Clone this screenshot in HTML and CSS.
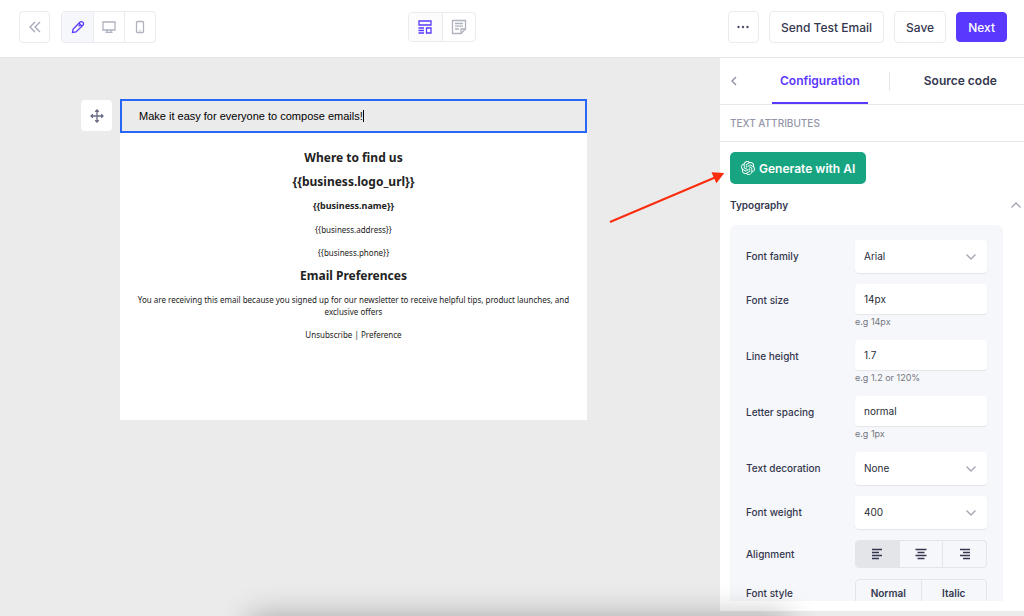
FILE: index.html
```html
<!DOCTYPE html>
<html lang="en">
<head>
  <meta charset="UTF-8">
  <meta name="viewport" content="width=device-width, initial-scale=1.0">
  <title>Email Editor</title>
  <link rel="stylesheet" href="styles.css">
</head>
<body>
  <header class="topbar">
    <div class="topbar-group">
      <button class="icon-btn" aria-label="Back">
        <svg width="14" height="14" viewBox="0 0 14 14"><path d="M7 2 2 7l5 5M12 2 7 7l5 5"/></svg>
      </button>
      <div class="segmented">
        <button class="active" aria-label="Edit">
          <svg width="14" height="14" viewBox="0 0 14 14"><path d="M1.5 12.5 2 9.3 8.8 2.2a2.2 2.2 0 0 1 3.1 3.1L5 12zM8 3.2l2.8 2.8M7.6 6.4l1.8-1.8"/></svg>
        </button>
        <button aria-label="Desktop preview">
          <svg width="14" height="14" viewBox="0 0 14 14"><path d="M1 2h12v8H1zM5 10v2M9 10v2M3.500 12.300h7"/></svg>
        </button>
        <button aria-label="Mobile preview">
          <svg width="14" height="14" viewBox="0 0 14 14"><rect x="3.5" y="1.500" width="7" height="11" rx="1"/><path d="M6.500 10.500h1"/></svg>
        </button>
      </div>
    </div>

    <div class="segmented views">
      <button class="active" aria-label="Blocks">
        <svg width="14" height="14" viewBox="0 0 14 14"><path d="M1 1h12v4H1zM8.500 8H13v5H8.500zM.5 8H6M.5 10.500H6M.5 13H6"/></svg>
      </button>
      <button aria-label="Notes">
        <svg width="16" height="16" viewBox="0 0 16 16"><path d="M1.500 1.500h13V10L10 14.500H1.500zM10 14.500V10h4.500M4 4.500h8M4 7.200h8M4 10h4"/></svg>
      </button>
    </div>

    <div class="topbar-group actions">
      <button class="icon-btn dots" aria-label="More">
        <svg width="14" height="14" viewBox="0 0 14 14"><circle cx="2.500" cy="7" r="1.200"/><circle cx="7" cy="7" r="1.200"/><circle cx="11.500" cy="7" r="1.200"/></svg>
      </button>
      <button class="btn">Send Test Email</button>
      <button class="btn">Save</button>
      <button class="btn btn-primary">Next</button>
    </div>
  </header>

  <div class="workspace">
    <main class="canvas">
      <button class="drag-handle" aria-label="Move block">
        <svg width="14" height="14" viewBox="0 0 14 14"><path d="M7 1v12M1 7h12M5.200 2.800 7 1l1.800 1.800M5.200 11.200 7 13l1.800-1.800M2.800 5.200 1 7l1.800 1.800M11.200 5.200 13 7l-1.800 1.800"/></svg>
      </button>
      <article class="email">
        <div class="text-block" contenteditable="true">Make it easy for everyone to compose emails!<span class="caret"></span></div>
        <div class="email-footer">
          <h2>Where to find us</h2>
          <h2>{{business.logo_url}}</h2>
          <h3>{{business.name}}</h3>
          <p>{{business.address}}</p>
          <p>{{business.phone}}</p>
          <h2>Email Preferences</h2>
          <p class="notice">You are receiving this email because you signed up for our newsletter to receive helpful tips, product launches, and exclusive offers</p>
          <p><a href="#">Unsubscribe</a> | <a href="#">Preference</a></p>
        </div>
      </article>
    </main>

    <aside class="sidebar">
      <nav class="tabs">
        <button class="collapse" aria-label="Collapse">
          <svg width="8" height="10" viewBox="0 0 8 10"><path d="M6 1 2 5l4 4"/></svg>
        </button>
        <button class="tab active">Configuration</button>
        <span class="divider"></span>
        <button class="tab">Source code</button>
      </nav>
      <h4 class="attributes-title">TEXT ATTRIBUTES</h4>

      <div class="settings">
        <button class="ai-btn">
          <svg width="14" height="14" viewBox="0 0 24 24"><path d="M22.2819 9.8211a5.9847 5.9847 0 0 0-.5157-4.9108 6.0462 6.0462 0 0 0-6.5098-2.9A6.0651 6.0651 0 0 0 4.9807 4.1818a5.9847 5.9847 0 0 0-3.9977 2.9 6.0462 6.0462 0 0 0 .7427 7.0966 5.98 5.98 0 0 0 .511 4.9107 6.051 6.051 0 0 0 6.5146 2.9001A5.9847 5.9847 0 0 0 13.2599 24a6.0557 6.0557 0 0 0 5.7718-4.2058 5.9894 5.9894 0 0 0 3.9977-2.9001 6.0557 6.0557 0 0 0-.7475-7.0729zm-9.022 12.6081a4.4755 4.4755 0 0 1-2.8764-1.0408l.1419-.0804 4.7783-2.7582a.7948.7948 0 0 0 .3927-.6813v-6.7369l2.02 1.1686a.071.071 0 0 1 .038.052v5.5826a4.504 4.504 0 0 1-4.4945 4.4944zm-9.6607-4.1254a4.4708 4.4708 0 0 1-.5346-3.0137l.142.0852 4.783 2.7582a.7712.7712 0 0 0 .7806 0l5.8428-3.3685v2.3324a.0804.0804 0 0 1-.0332.0615L9.74 19.9502a4.4992 4.4992 0 0 1-6.1408-1.6464zM2.3408 7.8956a4.485 4.485 0 0 1 2.3655-1.9728V11.6a.7664.7664 0 0 0 .3879.6765l5.8144 3.3543-2.0201 1.1685a.0757.0757 0 0 1-.071 0l-4.8303-2.7865A4.504 4.504 0 0 1 2.3408 7.872zm16.5963 3.8558L13.1038 8.364 15.1192 7.2a.0757.0757 0 0 1 .071 0l4.8303 2.7913a4.4944 4.4944 0 0 1-.6765 8.1042v-5.6772a.79.79 0 0 0-.407-.667zm2.0107-3.0231l-.142-.0852-4.7735-2.7818a.7759.7759 0 0 0-.7854 0L9.409 9.2297V6.8974a.0662.0662 0 0 1 .0284-.0615l4.8303-2.7866a4.4992 4.4992 0 0 1 6.6802 4.66zM8.3065 12.863l-2.02-1.1638a.0804.0804 0 0 1-.038-.0567V6.0742a4.4992 4.4992 0 0 1 7.3757-3.4537l-.142.0805L8.704 5.459a.7948.7948 0 0 0-.3927.6813zm1.0976-2.3654l2.602-1.4998 2.6069 1.4998v2.9994l-2.5974 1.4997-2.6067-1.4997Z"/></svg>
          Generate with AI
        </button>

        <button class="section-toggle">
          Typography
          <svg width="12" height="8" viewBox="0 0 12 8"><path d="M1.500 6.500 6 2l4.500 4.500"/></svg>
        </button>

        <form class="panel">
          <div class="field">
            <label for="family">Font family</label>
            <div class="select">
              <select id="family"><option>Arial</option></select>
              <svg width="12" height="8" viewBox="0 0 12 8"><path d="M1.500 1.500 6 6l4.500-4.500"/></svg>
            </div>
          </div>
          <div class="field">
            <label for="size">Font size</label>
            <div>
              <input id="size" type="text" value="14px">
              <small>e.g 14px</small>
            </div>
          </div>
          <div class="field">
            <label for="line">Line height</label>
            <div>
              <input id="line" type="text" value="1.7">
              <small>e.g 1.2 or 120%</small>
            </div>
          </div>
          <div class="field">
            <label for="spacing">Letter spacing</label>
            <div>
              <input id="spacing" type="text" value="normal">
              <small>e.g 1px</small>
            </div>
          </div>
          <div class="field">
            <label for="decoration">Text decoration</label>
            <div class="select">
              <select id="decoration"><option>None</option></select>
              <svg width="12" height="8" viewBox="0 0 12 8"><path d="M1.500 1.500 6 6l4.500-4.500"/></svg>
            </div>
          </div>
          <div class="field">
            <label for="weight">Font weight</label>
            <div class="select">
              <select id="weight"><option>400</option></select>
              <svg width="12" height="8" viewBox="0 0 12 8"><path d="M1.500 1.500 6 6l4.500-4.500"/></svg>
            </div>
          </div>
          <div class="field">
            <span class="label" id="align-label">Alignment</span>
            <div class="toggle" role="group" aria-labelledby="align-label">
              <button type="button" class="active" aria-label="Left">
                <svg width="12" height="12" viewBox="0 0 12 12"><path d="M1 1.500h10M1 4.500h7M1 7.500h10M1 10.500h7"/></svg>
              </button>
              <button type="button" aria-label="Center">
                <svg width="12" height="12" viewBox="0 0 12 12"><path d="M.5 1.500h11M2.500 4.500h7M.5 7.500h11M2.500 10.500h7"/></svg>
              </button>
              <button type="button" aria-label="Right">
                <svg width="12" height="12" viewBox="0 0 12 12"><path d="M1 1.500h10M4 4.500h7M1 7.500h10M4 10.500h7"/></svg>
              </button>
            </div>
          </div>
          <div class="field">
            <span class="label" id="style-label">Font style</span>
            <div class="toggle" role="group" aria-labelledby="style-label">
              <button type="button">Normal</button>
              <button type="button">Italic</button>
            </div>
          </div>
        </form>
      </div>

      <!-- pointer to the AI button -->
      <svg class="arrow" width="116" height="56" viewBox="0 0 116 56">
        <path class="arrow-line" d="M2 53 107 8.500"/>
        <path class="arrow-head" d="M115 4.500 108.500 13 104.500 4z"/>
      </svg>
    </aside>
  </div>
  <div class="dock-shadow"></div>
</body>
</html>
```
FILE: styles.css
```css
* {
  box-sizing: border-box;
}
body {
  margin: 0;
  height: 100vh;
  display: flex;
  flex-direction: column;
  overflow: hidden;
  font-family: Inter, 'Liberation Sans', sans-serif;
  font-size: 10px;
  color: #34374f;
  background: #ebebeb;
}
button, input, select {
  font: inherit;
  color: inherit;
  margin: 0;
  padding: 0;
  border: none;
  background: none;
}
button {
  cursor: pointer;
}
svg {
  display: block;
  fill: none;
  stroke: currentColor;
  stroke-width: 1.3;
}

/* top bar */
.topbar {
  flex: none;
  display: flex;
  justify-content: space-between;
  align-items: center;
  height: 58px;
  padding: 0 17px 3px 19px;
  background: #fff;
  border-bottom: 1px solid #e6e6e6;
}
.topbar-group {
  display: flex;
  align-items: center;
  gap: 11px;
}
.icon-btn, .segmented, .btn {
  height: 32px;
  border: 1px solid #ebebef;
  border-radius: 4px;
}
.icon-btn {
  display: grid;
  place-items: center;
  width: 31px;
  color: #a5a7b8;
}
.dots {
  color: #4d5068;
}
.dots svg {
  fill: currentColor;
  stroke: none;
}
.segmented {
  display: flex;
  overflow: hidden;
  color: #b0b2be;
}
.segmented button {
  display: grid;
  place-items: center;
  width: 31px;
}
.segmented button + button {
  border-left: 1px solid #ebebef;
}
.segmented .active {
  color: #5a38fd;
  background: #f6f7fa;
}
.views {
  height: 30px;
}
.views button {
  width: 33px;
}
.views .active {
  background: #fcfcfc;
}
.btn {
  padding: 0 11px;
  font-size: 12px;
  font-weight: 500;
}
.btn-primary {
  height: 30px;
  color: #fff;
  background: #5a38fd;
  border-color: #5a38fd;
}
.actions {
  gap: 10px;
}

.workspace {
  flex: 1;
  display: flex;
  min-height: 0;
  padding-bottom: 5px;
}

/* email canvas */
.canvas {
  flex: 1;
  display: flex;
  align-items: flex-start;
  gap: 8px;
  padding: 41px 133px 0 81px;
}
.drag-handle {
  flex: none;
  display: grid;
  place-items: center;
  width: 31px;
  height: 31px;
  margin-top: 1px;
  color: #6a6d84;
  background: #fff;
  border-radius: 4px;
}
.email {
  flex: 1;
  background: #fff;
}
.text-block {
  padding: 0 17px;
  border: 2px solid #2866f6;
  background: #ebebeb;
  outline: none;
  color: #000;
  font: 11px/30px 'Liberation Sans', Arial, sans-serif;
}
.caret {
  display: inline-block;
  width: 1px;
  height: 12px;
  vertical-align: -2px;
  background: #000;
}
.email-footer {
  padding: 13px 14px 74px;
  text-align: center;
  color: #222;
  font: 8px/12px 'Lucida Grande', 'Noto Sans', sans-serif;
}
.email-footer h2, .email-footer h3, .email-footer p {
  margin: 0;
}
.email-footer h2 {
  font-size: 12px;
  line-height: 24px;
}
.email-footer h3 {
  font-size: 9px;
  line-height: 24px;
}
.email-footer p {
  line-height: 23px;
}
.email-footer .notice {
  padding: 6px 0 5px;
  line-height: 12px;
}
.email-footer a {
  color: inherit;
  text-decoration: none;
}

/* sidebar */
.sidebar {
  position: relative;
  flex: none;
  display: flex;
  flex-direction: column;
  width: 304px;
  background: #fff;
}
.tabs {
  flex: none;
  display: flex;
  align-items: center;
  height: 47px;
  padding-left: 10px;
  border-bottom: 1px solid #e8e8ec;
}
.collapse {
  color: #8c8fa2;
}
.tab {
  height: 46px;
  padding: 0 8px;
  border-bottom: 2px solid transparent;
  font-size: 12px;
  font-weight: 600;
}
.collapse + .tab {
  margin-left: 34px;
}
.tab.active {
  color: #5a38fd;
  border-color: #5a38fd;
}
.divider {
  width: 1px;
  height: 19px;
  margin: 0 26px 0 21px;
  background: #e8e8ec;
}
.attributes-title {
  flex: none;
  margin: 0;
  padding-left: 10px;
  border-bottom: 1px solid #e8e8ec;
  color: #9496a8;
  font-size: 10px;
  font-weight: 500;
  line-height: 36px;
}
.settings {
  flex: 1;
  min-height: 0;
  margin-bottom: 10px;
  padding: 10px 0 0 10px;
  overflow: hidden;
}
.ai-btn {
  display: flex;
  align-items: center;
  gap: 4px;
  height: 32px;
  padding: 0 11px;
  border-radius: 5px;
  color: #fff;
  background: #17a480;
  font-size: 12px;
  font-weight: 600;
}
.ai-btn svg {
  fill: currentColor;
  stroke: none;
}
.section-toggle {
  display: flex;
  justify-content: space-between;
  align-items: center;
  width: 100%;
  height: 41px;
  padding-right: 2px;
  font-weight: 600;
}
.section-toggle svg, .select svg {
  color: #a3a5b5;
}
.panel {
  display: flex;
  flex-direction: column;
  gap: 11px;
  margin-right: 21px;
  padding: 15px 16px;
  border-radius: 6px;
  background: #f6f7fa;
}
.field {
  display: grid;
  grid-template-columns: 1fr 132px;
  align-items: start;
}
.field label {
  line-height: 33px;
  font-weight: 500;
}
.field .label {
  line-height: 28px;
  font-weight: 500;
}
.field input, .field select {
  display: block;
  width: 100%;
  height: 30px;
  padding: 0 9px;
  border-radius: 4px;
  color: #292b38;
  background: #fff;
  box-shadow: 0 1px 1px #e4e5e9;
}
.select {
  display: grid;
  align-items: center;
}
.select select, .select svg {
  grid-area: 1 / 1;
}
.field .select select {
  height: 33px;
  padding-bottom: 2px;
  appearance: none;
}
.select svg {
  justify-self: end;
  margin-right: 10px;
  pointer-events: none;
}
.field small {
  display: block;
  color: #74767f;
  font-size: 9px;
  line-height: 15px;
}
.toggle {
  display: flex;
  height: 28px;
  border: 1px solid #e4e5e9;
  border-radius: 4px;
  overflow: hidden;
  color: #34374f;
  font-weight: 600;
}
.toggle button {
  flex: 1;
  display: grid;
  place-items: center;
}
.toggle button + button {
  border-left: 1px solid #e4e5e9;
}
.toggle .active {
  background: #e4e5e9;
}

.arrow {
  position: absolute;
  top: 111px;
  left: -112px;
  pointer-events: none;
}
.arrow-line {
  stroke: #fb2c0e;
  stroke-width: 2;
}
.arrow-head {
  fill: #fb2c0e;
  stroke: #fb2c0e;
}

.dock-shadow {
  position: fixed;
  top: 100%;
  left: 250px;
  right: 236px;
  height: 60px;
  box-shadow: 0 0 30px rgba(0, 0, 0, 0.3);
}
```
